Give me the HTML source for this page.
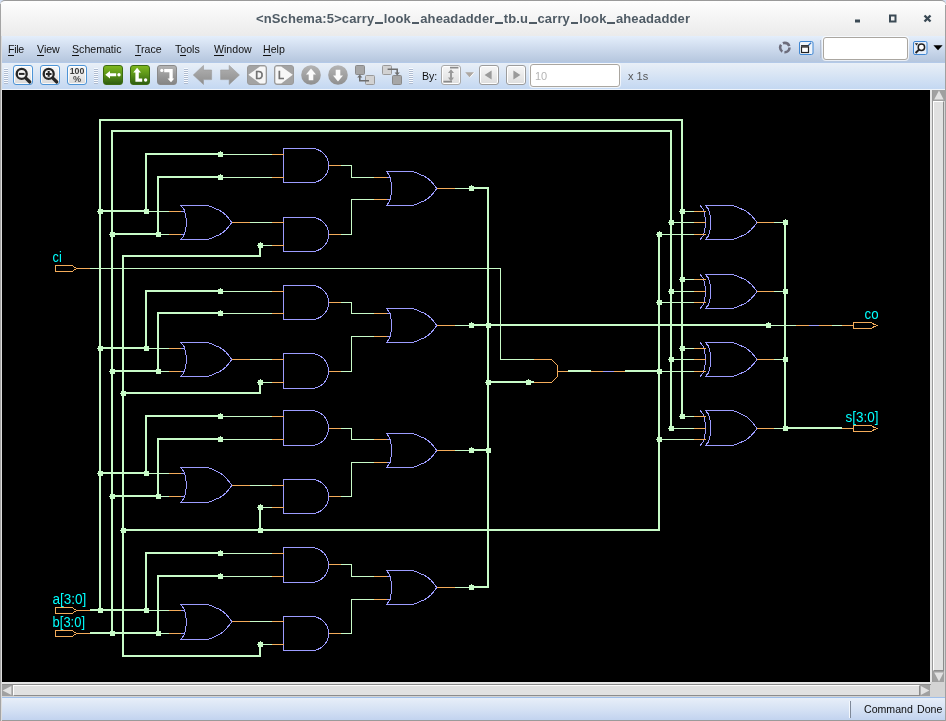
<!DOCTYPE html>
<html>
<head>
<meta charset="utf-8">
<title>nSchema</title>
<style>
html,body{margin:0;padding:0;}
body{width:946px;height:721px;overflow:hidden;background:#c9d8f1;font-family:"Liberation Sans",sans-serif;position:relative;}
.abs{position:absolute;}
#title .t,#menubar .m,#toolbar span,#status .txt,svg.sch,.btn svg{will-change:transform;}
#win{position:absolute;left:0;top:0;width:946px;height:721px;overflow:hidden;background:#d3dff3;}
#title{position:absolute;left:0;top:0;width:946px;height:36px;background:linear-gradient(#fefefe,#f6f6f6 40%,#ebebeb);border-top:1px solid #9a9a9a;box-sizing:border-box;border-radius:5px 5px 0 0;}
#title .t{position:absolute;left:256px;top:9px;font-weight:bold;font-size:13px;line-height:17px;color:#4f5b65;white-space:nowrap;letter-spacing:0.12px;}
#title .us{display:inline-block;width:7.6px;height:2px;background:#4f5b65;vertical-align:-0.8px;margin:0 .9px;}
#menubar{position:absolute;left:0;top:36px;width:946px;height:26px;background:linear-gradient(#e4eefb,#b5c6de);}
#menubar .m{position:absolute;top:6px;font-size:10.6px;line-height:14px;color:#111;white-space:nowrap;}
#menubar .m u{text-decoration:none;border-bottom:1px solid #111;}
#toolbar{position:absolute;left:0;top:62px;width:946px;height:28px;background:linear-gradient(#eaf0f7,#c4d8f2);box-shadow:inset 0 1px 0 #b3c9e8;border-bottom:1px solid #eef3fa;box-sizing:border-box;}
.grip{position:absolute;top:6px;width:4px;height:16px;background:repeating-linear-gradient(#f8fbff 0,#f8fbff 1px,#aebbd0 1px,#aebbd0 2px);}
.btn{position:absolute;top:3px;width:20px;height:20px;box-sizing:border-box;border-radius:3px;}
.bblue{border:1px solid #4d94d6;background:linear-gradient(#f8f8f8,#ececec 50%,#d8d8d8);box-shadow:inset 0 0 0 1px rgba(255,255,255,.8);}
.bgreen{background:linear-gradient(#7fb71f,#5c9618 45%,#2f5d10);border:1px solid #3c6b12;}
.bgray{background:linear-gradient(#b4b4b4,#9a9a9a 50%,#858585);border:1px solid #8a8a8a;}
.blight{border:1px solid #a9a9a9;background:linear-gradient(#f6f6f6,#dedede);box-shadow:inset 0 0 0 1px #fff;}
.btn svg{position:absolute;left:-1px;top:-1px;}
#canvas{position:absolute;left:2px;top:90px;width:928px;height:592px;background:#000;overflow:hidden;}
#canvas svg.sch{position:absolute;left:0;top:0;}
#vsb{position:absolute;left:930px;top:90px;width:16px;height:592px;background:#d4d4d4;}
#hsb{position:absolute;left:0px;top:682px;width:946px;height:15px;background:#d4d4d4;}
#status{position:absolute;left:0;top:697px;width:946px;height:24px;background:linear-gradient(#e7eef8,#d6e2f4 50%,#c2d3ef);border-top:1px solid #9fbfea;border-bottom:1px solid #9a9a9a;box-sizing:border-box;}
#status .txt{position:absolute;left:864px;top:4px;font-size:10.6px;line-height:14px;color:#0c0c0c;white-space:nowrap;word-spacing:1.2px;}
#lb{position:absolute;left:0;top:4px;width:1px;height:717px;background:#a4a4a4;}
#lb2{position:absolute;left:1px;top:36px;width:1px;height:685px;background:#dcdcdc;}
#rb{position:absolute;left:945px;top:5px;width:1px;height:716px;background:#a0a0a0;}
</style>
</head>
<body>
<div id="win">
<div id="title"><div class="t">&lt;nSchema:5&gt;carry<i class="us"></i>look<i class="us"></i>aheadadder<i class="us"></i>tb.u<i class="us"></i>carry<i class="us"></i>look<i class="us"></i>aheadadder</div>
<svg class="abs" style="left:850px;top:9.2px" width="90" height="16" viewBox="850 10 90 16"><g fill="none" stroke="#3b4a55" stroke-width="2"><path d="M855 21h5" stroke-width="3"/><rect x="890" y="15.5" width="5.5" height="6"/><path d="M924.5 15.5l6 6M930.5 15.5l-6 6" stroke-width="2.4"/></g></svg>
</div>
<div id="menubar">
<span class="m" style="left:7.7px;letter-spacing:-0.3px"><u>F</u>ile</span>
<span class="m" style="left:36.9px"><u>V</u>iew</span>
<span class="m" style="left:71.6px"><u>S</u>chematic</span>
<span class="m" style="left:134.6px"><u>T</u>race</span>
<span class="m" style="left:175px">T<u>o</u>ols</span>
<span class="m" style="left:213.6px"><u>W</u>indow</span>
<span class="m" style="left:263.4px"><u>H</u>elp</span>

<svg class="abs" style="left:778px;top:5px" width="14" height="14" viewBox="0 0 14 14"><circle cx="6.8" cy="6.6" r="4.7" fill="none" stroke="#6d6d7c" stroke-width="2.6" stroke-dasharray="7.6 2.2"/></svg>
<svg class="abs" style="left:799px;top:5px" width="15" height="15" viewBox="0 0 15 15"><rect x=".5" y=".5" width="13.5" height="13" rx="1.5" fill="#eef4fb" stroke="#3f86d2"/><rect x="2.5" y="6" width="7" height="5.5" fill="#fff" stroke="#222" stroke-width="1.2"/><path d="M2 4.8h8" stroke="#222" stroke-width="1.4"/><path d="M9.6 4.2l2.6-2.6" stroke="#2b6fc0" stroke-width="1.3"/></svg>
<div class="abs" style="left:820px;top:4px;width:1px;height:18px;background:#b5bfd0"></div>
<div class="abs" style="left:823px;top:1px;width:85px;height:23px;box-sizing:border-box;border:1px solid #aaa6a0;border-radius:3px;background:#fff;box-shadow:0 0 0 1px rgba(255,255,255,.7)"></div>
<svg class="abs" style="left:913px;top:5px" width="15" height="15" viewBox="0 0 15 15"><rect x=".5" y=".5" width="13.5" height="13" rx="1.5" fill="#e6eef9" stroke="#3f86d2"/><circle cx="8.4" cy="6.2" r="3.2" fill="#fff" stroke="#222" stroke-width="1.5"/><path d="M6 8.6L2.6 12" stroke="#222" stroke-width="2"/><path d="M1.8 2.2h3.4L3.5 4.4z" fill="#222"/></svg>
<svg class="abs" style="left:933px;top:9px" width="10" height="6" viewBox="0 0 10 6"><path d="M.4.2h9.2L5 5.2z" fill="#000"/></svg>

</div>
<div id="toolbar">

<div class="grip" style="left:4px"></div>
<div class="btn bblue" style="left:13px"><svg width="20" height="20" viewBox="0 0 20 20"><circle cx="8.7" cy="8.9" r="5" fill="#f4f4f4" stroke="#262626" stroke-width="2.3"/><path d="M12.6 12.9l4.2 4.1" stroke="#262626" stroke-width="3.2" stroke-linecap="round"/><path d="M5.9 8.9h5.6" stroke="#262626" stroke-width="2"/></svg></div>
<div class="btn bblue" style="left:40px"><svg width="20" height="20" viewBox="0 0 20 20"><circle cx="8.7" cy="8.9" r="5" fill="#f4f4f4" stroke="#262626" stroke-width="2.3"/><path d="M12.6 12.9l4.2 4.1" stroke="#262626" stroke-width="3.2" stroke-linecap="round"/><path d="M5.9 8.9h5.6M8.7 6.1v5.6" stroke="#262626" stroke-width="2"/></svg></div>
<div class="btn bblue" style="left:67px"><svg width="20" height="20" viewBox="0 0 20 20"><text x="10" y="9.3" text-anchor="middle" font-family="Liberation Sans, sans-serif" font-weight="bold" font-size="8.8" fill="#3a3a3a">100</text><text x="10" y="17.4" text-anchor="middle" font-family="Liberation Sans, sans-serif" font-weight="bold" font-size="9.2" fill="#4a4a4a">%</text></svg></div>
<div class="grip" style="left:94px"></div>
<div class="btn bgreen" style="left:103px"><svg width="20" height="20" viewBox="0 0 20 20"><path d="M2.3 9.8L7 6v2.3h6.2v3H7v2.3z" fill="#fff"/><circle cx="16" cy="9.8" r="1.7" fill="#fff"/></svg></div>
<div class="btn bgreen" style="left:130px"><svg width="20" height="20" viewBox="0 0 20 20"><path d="M7.1 2.8L11 7.4H8.8v6.1h3.4v3.2H5.4V7.4H3.3z" fill="#fff"/><circle cx="15.6" cy="15" r="1.7" fill="#fff"/></svg></div>
<div class="btn bgray" style="left:157px"><svg width="20" height="20" viewBox="0 0 20 20"><circle cx="4.8" cy="5.4" r="1.6" fill="#fff"/><path d="M7.2 4h8.5v9.4h1.6L14 17.3 10.5 13.4h1.9V7.2H7.2z" fill="#fff"/></svg></div>
<div class="grip" style="left:184px"></div>
<svg class="abs" style="left:193px;top:3px" width="20" height="20" viewBox="0 0 20 20"><defs><linearGradient id="ga" x1="0" y1="0" x2="0" y2="1"><stop offset="0" stop-color="#b2b2b2"/><stop offset="1" stop-color="#8e8e8e"/></linearGradient></defs><path d="M.3 10L10.5.4V5h8.1v9.6h-8.1v4.9z" fill="url(#ga)" stroke="#9a9a9a" stroke-width=".6"/></svg>
<svg class="abs" style="left:220px;top:3px" width="20" height="20" viewBox="0 0 20 20"><path d="M19.4 10L9.2.4V5H.6v9.6h8.6v4.9z" fill="url(#ga)" stroke="#9a9a9a" stroke-width=".6"/></svg>
<div class="btn bgray" style="left:247px;border-color:#9a9a9a;background:#a3a3a3"><svg width="20" height="20" viewBox="0 0 20 20"><path d="M1.4 9.8L13 1.6h4.2q1.4 0 1.4 1.4v14q0 1.4-1.4 1.4H13z" fill="#f7f7f7"/><text x="12.2" y="13.7" text-anchor="middle" font-family="Liberation Sans, sans-serif" font-size="10.8" fill="#6e6e6e" stroke="#6e6e6e" stroke-width=".6">D</text></svg></div>
<div class="btn bgray" style="left:274px;border-color:#9a9a9a;background:#a3a3a3"><svg width="20" height="20" viewBox="0 0 20 20"><path d="M18.8 9.8L7.2 1.6H2.8q-1.4 0-1.4 1.4v14q0 1.4 1.4 1.4h4.4z" fill="#f7f7f7"/><text x="7" y="13.7" text-anchor="middle" font-family="Liberation Sans, sans-serif" font-size="10.8" fill="#6e6e6e" stroke="#6e6e6e" stroke-width=".6">L</text></svg></div>
<svg class="abs" style="left:301px;top:3px" width="20" height="20" viewBox="0 0 20 20"><defs><linearGradient id="gc" x1="0" y1="0" x2="0" y2="1"><stop offset="0" stop-color="#b4b4b4"/><stop offset="1" stop-color="#8f8f8f"/></linearGradient></defs><circle cx="10" cy="10" r="9.8" fill="url(#gc)"/><path d="M10 3.6L15 9.4h-2.7v5.8H7.7V9.4H5z" fill="#fbfbfb"/></svg>
<svg class="abs" style="left:328px;top:3px" width="20" height="20" viewBox="0 0 20 20"><circle cx="10" cy="10" r="9.8" fill="url(#gc)"/><path d="M10 16.4L15 10.6h-2.7V4.8H7.7v5.8H5z" fill="#fbfbfb"/></svg>
<svg class="abs" style="left:355px;top:3px" width="20" height="20" viewBox="0 0 20 20"><rect x=".5" y=".5" width="9" height="9" rx="1" fill="#a6a6a6" stroke="#8a8a8a"/><rect x="10.5" y="10.5" width="9" height="9" rx="1" fill="#d2d2d2" stroke="#9a9a9a"/><path d="M14 15.7H4.8V12" fill="none" stroke="#6e6e6e" stroke-width="1.6"/><path d="M2.2 12.4L4.8 9.6l2.6 2.8z" fill="#6e6e6e"/></svg>
<svg class="abs" style="left:382px;top:3px" width="20" height="20" viewBox="0 0 20 20"><rect x=".5" y=".5" width="9" height="9" rx="1" fill="#d2d2d2" stroke="#9a9a9a"/><rect x="10.5" y="10.5" width="9" height="9" rx="1" fill="#a6a6a6" stroke="#8a8a8a"/><path d="M5.6 4.3h9.6V8" fill="none" stroke="#6e6e6e" stroke-width="1.6"/><path d="M12.6 7.6L15.2 10.4l2.6-2.8z" fill="#6e6e6e"/></svg>
<div class="grip" style="left:409px"></div>
<span class="abs" style="left:421.6px;top:7px;font-size:10.6px;line-height:14px;color:#111;">By:</span>
<div class="btn blight" style="left:441px"><svg width="20" height="20" viewBox="0 0 20 20"><path d="M9 2.6h8.4M2.4 16.6h8.6" stroke="#8a8a8a" stroke-width="1.6"/><path d="M10 4.2L13 8h-2v4.6h2L10 16.4 7 12.6h2V8H7z" fill="#9a9a9a"/></svg></div>
<svg class="abs" style="left:465px;top:10px" width="10" height="6" viewBox="0 0 10 6"><path d="M.2.2h9.2L4.8 5.6z" fill="#aea8a2"/><path d="M9.4.2L4.8 5.6" stroke="#fff" stroke-width="1"/></svg>
<div class="btn blight" style="left:479px;border-color:#9c9c9c"><svg width="20" height="20" viewBox="0 0 20 20"><path d="M5.6 10L12.6 5.6v8.8z" fill="#9a9a9a"/></svg></div>
<div class="btn blight" style="left:506px;border-color:#9c9c9c"><svg width="20" height="20" viewBox="0 0 20 20"><path d="M14.4 10L7.4 5.6v8.8z" fill="#9a9a9a"/></svg></div>
<div class="abs" style="left:530px;top:2px;width:90px;height:23px;box-sizing:border-box;border:1px solid #aaa6a0;border-radius:3px;background:#fff;box-shadow:0 0 0 1px rgba(255,255,255,.7)"><span class="abs" style="left:4px;top:4px;font-size:11px;line-height:14px;color:#b4b4b4">10</span></div>
<span class="abs" style="left:628px;top:7px;font-size:11px;line-height:14px;color:#555;">x 1s</span>

</div>
<div id="canvas">
<svg class="sch" width="928" height="592" viewBox="2 90 928 592">
<path d="M100 210h47v2h-47zM112 233h47v2h-47zM98 209h5v5h-5zM100 208h1v1h-1zM97 211h1v1h-1zM110 232h5v5h-5zM112 231h1v1h-1zM109 234h1v1h-1zM144 209h5v5h-5zM146 208h1v1h-1zM143 211h1v1h-1zM156 232h5v5h-5zM158 231h1v1h-1zM155 234h1v1h-1zM145 153h2v59h-2zM157 176h2v59h-2zM146 153h75v2h-75zM158 176h63v2h-63zM218 152h5v5h-5zM220 151h1v1h-1zM217 154h1v1h-1zM218 175h5v5h-5zM220 174h1v1h-1zM217 177h1v1h-1zM221 154h51v1h-51zM221 177h51v1h-51zM147 211h22v1h-22zM159 234h10v1h-10zM250 222h22v1h-22zM261 245h11v1h-11zM258 243h5v5h-5zM260 242h1v1h-1zM257 245h1v1h-1zM341 165h11v1h-11zM351 165h1v13h-1zM351 177h23v1h-23zM341 234h11v1h-11zM351 199h1v36h-1zM351 199h23v1h-23zM455 188h16v1h-16zM469 186h5v5h-5zM471 185h1v1h-1zM468 188h1v1h-1zM100 347h47v2h-47zM112 370h47v2h-47zM98 346h5v5h-5zM100 345h1v1h-1zM97 348h1v1h-1zM110 369h5v5h-5zM112 368h1v1h-1zM109 371h1v1h-1zM144 346h5v5h-5zM146 345h1v1h-1zM143 348h1v1h-1zM156 369h5v5h-5zM158 368h1v1h-1zM155 371h1v1h-1zM145 290h2v59h-2zM157 312h2v60h-2zM146 290h75v2h-75zM158 312h63v2h-63zM218 289h5v5h-5zM220 288h1v1h-1zM217 291h1v1h-1zM218 311h5v5h-5zM220 310h1v1h-1zM217 313h1v1h-1zM221 291h51v1h-51zM221 313h51v1h-51zM147 348h22v1h-22zM159 371h10v1h-10zM250 359h22v1h-22zM261 382h11v1h-11zM258 380h5v5h-5zM260 379h1v1h-1zM257 382h1v1h-1zM341 302h11v1h-11zM351 302h1v12h-1zM351 313h23v1h-23zM341 371h11v1h-11zM351 336h1v36h-1zM351 336h23v1h-23zM455 325h16v1h-16zM469 323h5v5h-5zM471 322h1v1h-1zM468 325h1v1h-1zM100 472h47v2h-47zM112 495h47v2h-47zM98 471h5v5h-5zM100 470h1v1h-1zM97 473h1v1h-1zM110 494h5v5h-5zM112 493h1v1h-1zM109 496h1v1h-1zM144 471h5v5h-5zM146 470h1v1h-1zM143 473h1v1h-1zM156 494h5v5h-5zM158 493h1v1h-1zM155 496h1v1h-1zM145 415h2v59h-2zM157 438h2v59h-2zM146 415h75v2h-75zM158 438h63v2h-63zM218 414h5v5h-5zM220 413h1v1h-1zM217 416h1v1h-1zM218 437h5v5h-5zM220 436h1v1h-1zM217 439h1v1h-1zM221 416h51v1h-51zM221 439h51v1h-51zM147 473h22v1h-22zM159 496h10v1h-10zM250 485h22v1h-22zM261 507h11v1h-11zM258 505h5v5h-5zM260 504h1v1h-1zM257 507h1v1h-1zM341 428h11v1h-11zM351 428h1v12h-1zM351 439h23v1h-23zM341 496h11v1h-11zM351 462h1v35h-1zM351 462h23v1h-23zM455 450h16v1h-16zM469 448h5v5h-5zM471 447h1v1h-1zM468 450h1v1h-1zM90 609h57v2h-57zM90 632h69v2h-69zM98 608h5v5h-5zM100 607h1v1h-1zM97 610h1v1h-1zM110 631h5v5h-5zM112 630h1v1h-1zM109 633h1v1h-1zM144 608h5v5h-5zM146 607h1v1h-1zM143 610h1v1h-1zM156 631h5v5h-5zM158 630h1v1h-1zM155 633h1v1h-1zM145 552h2v59h-2zM157 575h2v59h-2zM146 552h75v2h-75zM158 575h63v2h-63zM218 551h5v5h-5zM220 550h1v1h-1zM217 553h1v1h-1zM218 574h5v5h-5zM220 573h1v1h-1zM217 576h1v1h-1zM221 553h51v1h-51zM221 576h51v1h-51zM147 610h22v1h-22zM159 633h10v1h-10zM250 621h22v1h-22zM261 644h11v1h-11zM258 642h5v5h-5zM260 641h1v1h-1zM257 644h1v1h-1zM341 564h11v1h-11zM351 564h1v13h-1zM351 576h23v1h-23zM341 633h11v1h-11zM351 599h1v35h-1zM351 599h23v1h-23zM455 587h16v1h-16zM469 585h5v5h-5zM471 584h1v1h-1zM468 587h1v1h-1zM122 255h2v402h-2zM123 255h138v2h-138zM259 245h2v12h-2zM121 391h5v5h-5zM123 390h1v1h-1zM120 393h1v1h-1zM123 392h138v2h-138zM259 382h2v12h-2zM121 528h5v5h-5zM123 527h1v1h-1zM120 530h1v1h-1zM123 529h537v2h-537zM259 507h2v24h-2zM258 528h5v5h-5zM260 527h1v1h-1zM257 530h1v1h-1zM123 655h138v2h-138zM259 644h2v13h-2zM99 119h2v492h-2zM111 130h2v504h-2zM100 119h583v2h-583zM112 130h560v2h-560zM681 119h2v298h-2zM670 130h2v299h-2zM658 234h2v297h-2zM471 187h18v2h-18zM487 187h2v401h-2zM471 324h298v2h-298zM486 323h5v5h-5zM488 322h1v1h-1zM485 325h1v1h-1zM766 323h5v5h-5zM768 322h1v1h-1zM765 325h1v1h-1zM471 449h18v2h-18zM486 448h5v5h-5zM488 447h1v1h-1zM485 450h1v1h-1zM471 586h18v2h-18zM486 380h5v5h-5zM488 379h1v1h-1zM485 382h1v1h-1zM488 381h46v2h-46zM526 380h5v5h-5zM528 379h1v1h-1zM525 382h1v1h-1zM90 268h411v1h-411zM500 268h1v92h-1zM500 359h34v1h-34zM568 370h23v2h-23zM625 370h35v2h-35zM680 209h5v5h-5zM682 208h1v1h-1zM679 211h1v1h-1zM683 211h11v1h-11zM669 220h5v5h-5zM671 219h1v1h-1zM668 222h1v1h-1zM672 222h22v1h-22zM657 232h5v5h-5zM659 231h1v1h-1zM656 234h1v1h-1zM660 234h34v1h-34zM774 222h11v1h-11zM783 220h5v5h-5zM785 219h1v1h-1zM782 222h1v1h-1zM680 277h5v5h-5zM682 276h1v1h-1zM679 279h1v1h-1zM683 279h11v1h-11zM669 289h5v5h-5zM671 288h1v1h-1zM668 291h1v1h-1zM672 291h22v1h-22zM657 300h5v5h-5zM659 299h1v1h-1zM656 302h1v1h-1zM660 302h34v1h-34zM774 291h11v1h-11zM783 289h5v5h-5zM785 288h1v1h-1zM782 291h1v1h-1zM680 346h5v5h-5zM682 345h1v1h-1zM679 348h1v1h-1zM683 348h11v1h-11zM669 357h5v5h-5zM671 356h1v1h-1zM668 359h1v1h-1zM672 359h22v1h-22zM657 369h5v5h-5zM659 368h1v1h-1zM656 371h1v1h-1zM660 371h34v1h-34zM774 359h11v1h-11zM783 357h5v5h-5zM785 356h1v1h-1zM782 359h1v1h-1zM680 414h5v5h-5zM682 413h1v1h-1zM679 416h1v1h-1zM683 416h11v1h-11zM669 426h5v5h-5zM671 425h1v1h-1zM668 428h1v1h-1zM672 428h22v1h-22zM657 437h5v5h-5zM659 436h1v1h-1zM656 439h1v1h-1zM660 439h34v1h-34zM774 428h11v1h-11zM783 426h5v5h-5zM785 425h1v1h-1zM782 428h1v1h-1zM784 222h2v207h-2zM785 427h57v2h-57zM769 325h27v1h-27zM832 325h10v1h-10z" fill="#c8fbc8" shape-rendering="crispEdges"/>
<path d="M181 211h4v1h-4zM181 234h4v1h-4zM387 177h4v1h-4zM387 199h4v1h-4zM181 348h4v1h-4zM181 371h4v1h-4zM387 313h4v1h-4zM387 336h4v1h-4zM181 473h4v1h-4zM181 496h4v1h-4zM387 439h4v1h-4zM387 462h4v1h-4zM181 610h4v1h-4zM181 633h4v1h-4zM387 576h4v1h-4zM387 599h4v1h-4zM603 371h11v1h-11zM809 325h10v1h-10z" fill="#9c9cff" shape-rendering="crispEdges"/>
<path d="M179.9 205.5H206.60000000000002L210.92 206.51L214.82 208.42L219.46 210.23L222.73 212.44L226.00 215.26L229.26 219.08L231.90 222.50L229.26 225.92L226.00 229.74L222.73 232.56L219.46 234.77L214.82 236.58L210.92 238.49L206.60000000000002 239.5H179.9 M180.50 205.50L183.94 209.30L185.61 215.00L186.50 222.50L185.61 230.00L183.94 235.70L180.50 239.50 M311.6 148.5H283.5V182.5H311.6A17.0 17.0 0 0 0 311.6 148.5Z M311.6 217.5H283.5V251.5H311.6A17.0 17.0 0 0 0 311.6 217.5Z M385.9 171.5H411.6L415.92 172.51L419.82 174.42L424.46 176.23L427.73 178.44L431.00 181.26L434.26 185.08L436.90 188.50L434.26 191.92L431.00 195.74L427.73 198.56L424.46 200.77L419.82 202.58L415.92 204.49L411.6 205.5H385.9 M386.50 171.50L389.49 175.30L390.93 181.00L391.70 188.50L390.93 196.00L389.49 201.70L386.50 205.50 M179.9 342.5H206.60000000000002L210.92 343.51L214.82 345.42L219.46 347.23L222.73 349.44L226.00 352.26L229.26 356.08L231.90 359.50L229.26 362.92L226.00 366.74L222.73 369.56L219.46 371.77L214.82 373.58L210.92 375.49L206.60000000000002 376.5H179.9 M180.50 342.50L183.94 346.30L185.61 352.00L186.50 359.50L185.61 367.00L183.94 372.70L180.50 376.50 M311.6 285.5H283.5V319.5H311.6A17.0 17.0 0 0 0 311.6 285.5Z M311.1 353.5H283.5V388.5H311.1A17.5 17.5 0 0 0 311.1 353.5Z M385.9 308.5H411.6L415.92 309.51L419.82 311.42L424.46 313.23L427.73 315.44L431.00 318.26L434.26 322.08L436.90 325.50L434.26 328.92L431.00 332.74L427.73 335.56L424.46 337.77L419.82 339.58L415.92 341.49L411.6 342.5H385.9 M386.50 308.50L389.49 312.30L390.93 318.00L391.70 325.50L390.93 333.00L389.49 338.70L386.50 342.50 M179.9 467.5H206.60000000000002L210.92 468.57L214.82 470.59L219.46 472.51L222.73 474.85L226.00 477.83L229.26 481.88L231.90 485.50L229.26 488.92L226.00 492.74L222.73 495.56L219.46 497.77L214.82 499.58L210.92 501.49L206.60000000000002 502.5H179.9 M180.50 467.50L183.94 471.41L185.61 477.28L186.50 485.00L185.61 492.72L183.94 498.59L180.50 502.50 M311.1 410.5H283.5V445.5H311.1A17.5 17.5 0 0 0 311.1 410.5Z M311.6 479.5H283.5V513.5H311.6A17.0 17.0 0 0 0 311.6 479.5Z M385.9 433.5H411.6L415.92 434.51L419.82 436.42L424.46 438.23L427.73 440.44L431.00 443.26L434.26 447.08L436.90 450.50L434.26 453.92L431.00 457.74L427.73 460.56L424.46 462.77L419.82 464.58L415.92 466.49L411.6 467.5H385.9 M386.50 433.50L389.49 437.30L390.93 443.00L391.70 450.50L390.93 458.00L389.49 463.70L386.50 467.50 M179.9 604.5H206.60000000000002L210.92 605.51L214.82 607.42L219.46 609.23L222.73 611.44L226.00 614.26L229.26 618.08L231.90 621.50L229.26 625.12L226.00 629.17L222.73 632.15L219.46 634.49L214.82 636.41L210.92 638.43L206.60000000000002 639.5H179.9 M180.50 604.50L183.94 608.41L185.61 614.28L186.50 622.00L185.61 629.72L183.94 635.59L180.50 639.50 M311.1 547.5H283.5V582.5H311.1A17.5 17.5 0 0 0 311.1 547.5Z M311.6 616.5H283.5V650.5H311.6A17.0 17.0 0 0 0 311.6 616.5Z M385.9 570.5H411.6L415.92 571.51L419.82 573.42L424.46 575.23L427.73 577.44L431.00 580.26L434.26 584.08L436.90 587.50L434.26 590.92L431.00 594.74L427.73 597.56L424.46 599.77L419.82 601.58L415.92 603.49L411.6 604.5H385.9 M386.50 570.50L389.49 574.30L390.93 580.00L391.70 587.50L390.93 595.00L389.49 600.70L386.50 604.50 M704.9 205.5H731.8L736.11 206.51L739.99 208.42L744.61 210.23L747.87 212.44L751.12 215.26L754.38 219.08L757.00 222.50L754.38 225.92L751.12 229.74L747.87 232.56L744.61 234.77L739.99 236.58L736.11 238.49L731.8 239.5H704.9 M705.50 205.50L708.60 209.30L710.10 215.00L710.90 222.50L710.10 230.00L708.60 235.70L705.50 239.50 M700.20 205.50L703.30 209.30L704.80 215.00L705.60 222.50L704.80 230.00L703.30 235.70L700.20 239.50 M704.9 274.5H731.8L736.11 275.51L739.99 277.42L744.61 279.23L747.87 281.44L751.12 284.26L754.38 288.08L757.00 291.50L754.38 294.92L751.12 298.74L747.87 301.56L744.61 303.77L739.99 305.58L736.11 307.49L731.8 308.5H704.9 M705.50 274.50L708.60 278.30L710.10 284.00L710.90 291.50L710.10 299.00L708.60 304.70L705.50 308.50 M700.20 274.50L703.30 278.30L704.80 284.00L705.60 291.50L704.80 299.00L703.30 304.70L700.20 308.50 M704.9 342.5H731.8L736.11 343.51L739.99 345.42L744.61 347.23L747.87 349.44L751.12 352.26L754.38 356.08L757.00 359.50L754.38 362.92L751.12 366.74L747.87 369.56L744.61 371.77L739.99 373.58L736.11 375.49L731.8 376.5H704.9 M705.50 342.50L708.60 346.30L710.10 352.00L710.90 359.50L710.10 367.00L708.60 372.70L705.50 376.50 M700.20 342.50L703.30 346.30L704.80 352.00L705.60 359.50L704.80 367.00L703.30 372.70L700.20 376.50 M704.9 410.5H731.8L736.11 411.57L739.99 413.59L744.61 415.51L747.87 417.85L751.12 420.83L754.38 424.88L757.00 428.50L754.38 431.92L751.12 435.74L747.87 438.56L744.61 440.77L739.99 442.58L736.11 444.49L731.8 445.5H704.9 M705.50 410.50L708.60 414.41L710.10 420.28L710.90 428.00L710.10 435.72L708.60 441.59L705.50 445.50 M700.20 410.50L703.30 414.41L704.80 420.28L705.60 428.00L704.80 435.72L703.30 441.59L700.20 445.50" fill="none" stroke="#9c9cff" stroke-width="1" shape-rendering="crispEdges"/>
<path d="M169 211h12v1h-12zM169 234h12v1h-12zM232 222h18v1h-18zM272 154h12v1h-12zM272 177h12v1h-12zM272 222h12v1h-12zM272 245h12v1h-12zM329 165h12v1h-12zM374 177h13v1h-13zM329 234h12v1h-12zM374 199h13v1h-13zM437 188h18v1h-18zM169 348h12v1h-12zM169 371h12v1h-12zM232 359h18v1h-18zM272 291h12v1h-12zM272 313h12v1h-12zM272 359h12v1h-12zM272 382h12v1h-12zM329 302h12v1h-12zM374 313h13v1h-13zM329 371h12v1h-12zM374 336h13v1h-13zM437 325h18v1h-18zM169 473h12v1h-12zM169 496h12v1h-12zM232 485h18v1h-18zM272 416h12v1h-12zM272 439h12v1h-12zM272 485h12v1h-12zM272 507h12v1h-12zM329 428h12v1h-12zM374 439h13v1h-13zM329 496h12v1h-12zM374 462h13v1h-13zM437 450h18v1h-18zM169 610h12v1h-12zM169 633h12v1h-12zM232 621h18v1h-18zM272 553h12v1h-12zM272 576h12v1h-12zM272 621h12v1h-12zM272 644h12v1h-12zM329 564h12v1h-12zM374 576h13v1h-13zM329 633h12v1h-12zM374 599h13v1h-13zM437 587h18v1h-18zM534 359h18v1h-18zM534 382h18v1h-18zM558 371h10v1h-10zM591 371h12v1h-12zM614 371h11v1h-11zM694 211h12v1h-12zM694 222h12v1h-12zM694 234h12v1h-12zM757 222h17v1h-17zM694 279h12v1h-12zM694 291h12v1h-12zM694 302h12v1h-12zM757 291h17v1h-17zM694 348h12v1h-12zM694 359h12v1h-12zM694 371h12v1h-12zM757 359h17v1h-17zM694 416h12v1h-12zM694 428h12v1h-12zM694 439h12v1h-12zM757 428h17v1h-17zM842 428h11v1h-11zM796 325h13v1h-13zM819 325h13v1h-13zM842 325h11v1h-11zM77 268h13v1h-13zM77 610h13v1h-13zM77 633h13v1h-13z" fill="#f4ac5a" shape-rendering="crispEdges"/>
<path d="M55.5 265.5H72L74.5 267.3L77 268.5L74.5 269.7L72 271.5H55.5Z M55.5 607.5H72L74.5 609.3L77 610.5L74.5 611.7L72 613.5H55.5Z M55.5 630.5H72L74.5 632.3L77 633.5L74.5 634.7L72 636.5H55.5Z M551.5 359.5L557.5 365.5V376.5L551.5 382.5" fill="none" stroke="#f4ac5a" stroke-width="1" shape-rendering="crispEdges"/>
<text x="52.6" y="262" fill="#00ffff" font-size="14" textLength="9.2" lengthAdjust="spacingAndGlyphs" font-family="Liberation Sans, sans-serif">ci</text>
<text x="52.4" y="604" fill="#00ffff" font-size="14" textLength="34.0" lengthAdjust="spacingAndGlyphs" font-family="Liberation Sans, sans-serif">a[3:0]</text>
<text x="52.6" y="627" fill="#00ffff" font-size="14" textLength="32.4" lengthAdjust="spacingAndGlyphs" font-family="Liberation Sans, sans-serif">b[3:0]</text>
<text x="864.6" y="319" fill="#00ffff" font-size="14" textLength="14.0" lengthAdjust="spacingAndGlyphs" font-family="Liberation Sans, sans-serif">co</text>
<text x="845.5" y="422" fill="#00ffff" font-size="14" textLength="33.0" lengthAdjust="spacingAndGlyphs" font-family="Liberation Sans, sans-serif">s[3:0]</text>
<path d="M853.5 322.5H871L874 324.3L877 325.5L874 326.7L871 328.5H853.5Z M853.5 425.5H871L874 427.3L877 428.5L874 429.7L871 431.5H853.5Z" fill="none" stroke="#f4ac5a" stroke-width="1" shape-rendering="crispEdges"/>
</svg>
</div>
<div id="vsb">
<div class="abs" style="left:0;top:0;width:3px;height:592px;background:#e4e4e4;border-right:1px solid #9a9a9a;box-sizing:border-box"></div>
<div class="abs" style="left:3px;top:0;width:12px;height:11px;background:#a0a0a0"></div>
<svg class="abs" style="left:3px;top:0" width="12" height="11" viewBox="0 0 12 11"><path d="M6 .6L10.6 9.4H1.2z" fill="#e2e2e2"/></svg>
<div class="abs" style="left:3px;top:11px;width:11px;height:570px;background:#e1e1e1;box-sizing:border-box;border-left:1px solid #fff;border-top:1px solid #fff;border-right:1px solid #8c8c8c;border-bottom:1px solid #8c8c8c"></div>
<div class="abs" style="left:3px;top:581px;width:11px;height:11px;background:#a0a0a0"></div>
<svg class="abs" style="left:3px;top:581px" width="12" height="11" viewBox="0 0 12 11"><path d="M6 10.4L10.6 1.6H1.2z" fill="#e2e2e2"/></svg>
</div>
<div id="hsb">
<div class="abs" style="left:0;top:0;width:931px;height:3px;background:#e4e4e4;border-bottom:1px solid #8e8e8e;box-sizing:border-box"></div>
<div class="abs" style="left:2px;top:3px;width:11px;height:11px;background:#a0a0a0"></div>
<svg class="abs" style="left:2px;top:3px" width="11" height="11" viewBox="0 0 11 11"><path d="M.6 5.5L9.4 1v9z" fill="#e2e2e2"/></svg>
<div class="abs" style="left:13px;top:3px;width:907px;height:11px;background:#e1e1e1;box-sizing:border-box;border-left:1px solid #fff;border-top:1px solid #fff;border-right:1px solid #8c8c8c;border-bottom:1px solid #8c8c8c"></div>
<div class="abs" style="left:920px;top:3px;width:10px;height:11px;background:#a0a0a0"></div>
<svg class="abs" style="left:920px;top:3px" width="10" height="11" viewBox="0 0 10 11"><path d="M9.4 5.5L.8 1v9z" fill="#e2e2e2"/></svg>
</div>
<div id="status"><div class="abs" style="left:849px;top:3px;width:1px;height:17px;background:#f4f8fd"></div><div class="abs" style="left:850px;top:3px;width:1px;height:17px;background:#7e8898"></div><div class="txt">Command Done</div></div>
<div id="lb"></div><div id="lb2"></div><div id="rb"></div>
</div>
</body>
</html>
